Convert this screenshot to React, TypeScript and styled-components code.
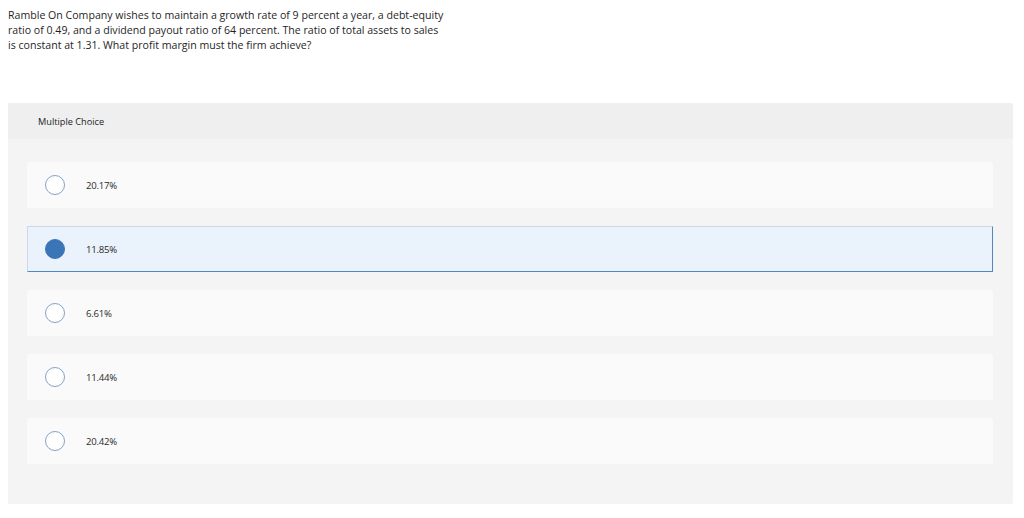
import React, { useState } from 'react';
import styled, { createGlobalStyle } from 'styled-components';

const GlobalStyle = createGlobalStyle`
  body {
    margin: 8px;
    background: #fff;
    font-family: 'Open Sans', 'Liberation Sans', sans-serif;
    color: #222;
  }
`;

const Question = styled.p`
  margin: 0;
  width: 480px;
  font-size: 10.6px;
  line-height: 15px;
  color: #1f1f1f;
`;

const Panel = styled.section`
  margin-top: 50px;
  width: 1005px;
  background: #f4f4f4;
  border-radius: 2px;
  overflow: hidden;
`;

const Header = styled.div`
  height: 36px;
  display: flex;
  align-items: center;
  padding-left: 30px;
  background: #efefef;
  font-size: 9.2px;
  color: #222;
`;

const List = styled.div`
  display: flex;
  flex-direction: column;
  gap: 18px;
  padding: 23px 20px 40px 19px;
`;

const Option = styled.label<{ selected?: boolean }>`
  box-sizing: border-box;
  height: 46px;
  display: flex;
  align-items: center;
  padding-left: 17px;
  background: ${_ => (_.selected ? '#eaf2fb' : '#fafafa')};
  border: 1px solid ${_ => (_.selected ? '#c9d8ea' : 'transparent')};
  border-right-color: ${_ => (_.selected ? '#4f86c6' : 'transparent')};
  border-bottom-color: ${_ => (_.selected ? '#4f86c6' : 'transparent')};
  border-radius: 1px;
  cursor: pointer;
`;

const Radio = styled.span<{ checked?: boolean }>`
  box-sizing: border-box;
  width: 20px;
  height: 20px;
  border-radius: 50%;
  flex-shrink: 0;
  background: ${_ => (_.checked ? '#3a75b8' : '#fff')};
  border: 1px solid ${_ => (_.checked ? '#3a75b8' : '#86a3c8')};
`;

const Label = styled.span`
  margin-left: 21px;
  font-size: 9.6px;
  color: #2a2a2a;
  letter-spacing: -0.25px;
`;

const choices = ['20.17%', '11.85%', '6.61%', '11.44%', '20.42%'];

export default function App() {
  const [picked, setPicked] = useState(1);

  return (
    <>
      <GlobalStyle />
      <Question>
        Ramble On Company wishes to maintain a growth rate of 9 percent a year, a debt-equity
        <br />
        ratio of 0.49, and a dividend payout ratio of 64 percent. The ratio of total assets to sales
        <br />
        is constant at 1.31. What profit margin must the firm achieve?
      </Question>
      <Panel>
        <Header>Multiple Choice</Header>
        <List>
          {choices.map((c, i) => (
            <Option key={c} selected={picked === i} onClick={() => setPicked(i)}>
              <Radio checked={picked === i} />
              <Label>{c}</Label>
            </Option>
          ))}
        </List>
      </Panel>
    </>
  );
}
